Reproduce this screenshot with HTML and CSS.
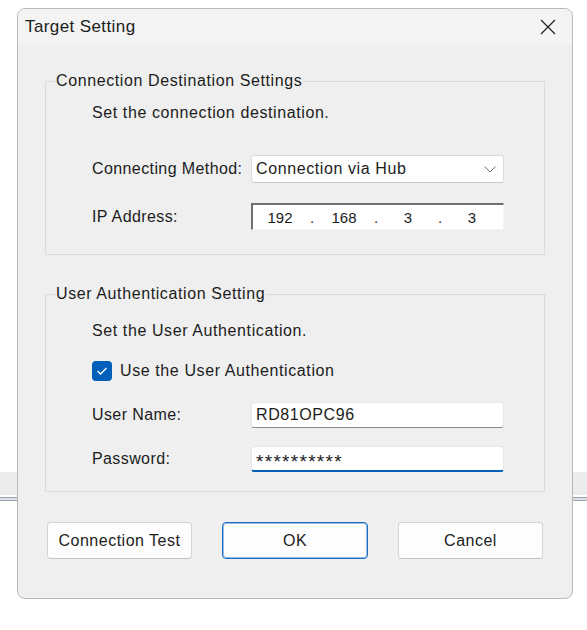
FILE: index.html
```html
<!DOCTYPE html>
<html lang="en">
<head>
<meta charset="UTF-8">
<meta name="viewport" content="width=device-width, initial-scale=1.0">
<title>Target Setting</title>
<link rel="stylesheet" href="styles.css">
</head>
<body>

<div class="dialog">
<div class="titlebar">
<span class="title">Target Setting</span>
<button class="close" aria-label="Close">
<svg width="16" height="16" viewBox="0 0 16 16"><path d="M1 1 L15 15 M15 1 L1 15" stroke="#1b1b1b" stroke-width="1.1" fill="none"/></svg>
</button>
</div>

<div class="content">
<fieldset class="group group-dest">
<legend>Connection Destination Settings</legend>
<div class="group-body">
<p class="note">Set the connection destination.</p>
<div class="row row-method">
<label>Connecting Method:</label>
<div class="select">
<span>Connection via Hub</span>
<svg width="12" height="7" viewBox="0 0 12 7"><path d="M0.5 0.5 L6 6 L11.5 0.5" stroke="#6a6a6a" stroke-width="1" fill="none"/></svg>
</div>
</div>
<div class="row row-ip">
<label>IP Address:</label>
<div class="ip">
<span class="seg">192</span><span class="dot">.</span>
<span class="seg">168</span><span class="dot">.</span>
<span class="seg">3</span><span class="dot">.</span>
<span class="seg">3</span>
</div>
</div>
</div>
</fieldset>

<fieldset class="group group-auth">
<legend>User Authentication Setting</legend>
<div class="group-body">
<p class="note">Set the User Authentication.</p>
<div class="check-row">
<span class="checkbox">
<svg width="12" height="10" viewBox="0 0 12 10"><path d="M1.5 5 L4.5 8 L10.5 2" stroke="#fff" stroke-width="1.3" fill="none"/></svg>
</span>
<span>Use the User Authentication</span>
</div>
<div class="row row-user">
<label>User Name:</label>
<div class="field">RD81OPC96</div>
</div>
<div class="row row-pass">
<label>Password:</label>
<div class="field field-focus"><span class="mask">**********</span></div>
</div>
</div>
</fieldset>

<div class="actions">
<button class="btn">Connection Test</button>
<button class="btn btn-default">OK</button>
<button class="btn">Cancel</button>
</div>
</div>
</div>

</body>
</html>
```

FILE: styles.css
```css
html {
height: 100%;
background: linear-gradient(#fff 0 472px, #ececec 472px 495px, #fff 495px 497px, #9fa3ad 497px 498px, #dde0e6 498px 500px, #9fa3ad 500px 501px, #fff 501px);
}
body {
margin: 0;
font-family: "Liberation Sans", Arial, sans-serif;
font-size: 16px;
letter-spacing: 0.6px;
color: #1c1c1c;
}
.dialog {
width: 556px;
height: 591px;
box-sizing: border-box;
margin: 8px 0 0 17px;
border: 1px solid #b9b9b9;
border-radius: 8px;
background: #efefef;
overflow: hidden;
}
.titlebar {
height: 36px;
background: #f3f3f3;
display: flex;
align-items: center;
justify-content: space-between;
padding: 0 16px 0 7px;
}
.title {
font-size: 17px;
letter-spacing: 0.4px;
}
.close {
border: none;
background: none;
padding: 0;
display: flex;
}
.content {
padding: 26px 27px 0;
}
.group {
margin: 0;
padding: 0;
border: 1px solid #dadada;
min-width: 0;
}
.group legend {
margin-left: 9px;
padding: 0 1px;
line-height: 20px;
}
.group-body {
padding: 12px 40px 24px 46px;
}
.group-auth {
margin-top: 29px;
}
.group-auth .group-body {
padding-top: 17px;
padding-bottom: 19px;
}
.note {
margin: 0;
line-height: 20px;
}
.row {
display: grid;
grid-template-columns: 159px 253px;
align-items: center;
}
.row label {
letter-spacing: 0.4px;
}
.row-method {
margin-top: 32px;
}
.row-ip {
margin-top: 20px;
}
.select {
height: 28px;
box-sizing: border-box;
background: #fff;
border: 1px solid #dcdcdc;
border-bottom-color: #c8c8c8;
border-radius: 3px;
display: flex;
align-items: center;
justify-content: space-between;
padding: 0 7px 0 4px;
}
.ip {
height: 27px;
box-sizing: border-box;
background: #fff;
border-top: 2px solid #6f6f6f;
border-left: 2px solid #6f6f6f;
border-right: 1px solid #f4f4f4;
border-bottom: 1px solid #f4f4f4;
display: flex;
align-items: center;
padding-left: 1px;
font-size: 15px;
letter-spacing: 0;
}
.seg {
width: 52px;
text-align: center;
}
.dot {
width: 12px;
text-align: center;
}
.check-row {
margin-top: 20px;
height: 20px;
display: flex;
align-items: center;
gap: 8px;
}
.checkbox {
width: 20px;
height: 20px;
box-sizing: border-box;
background: #005fb8;
border-radius: 4px;
display: flex;
align-items: center;
justify-content: center;
}
.row-user {
margin-top: 21px;
}
.row-pass {
margin-top: 18px;
}
.field {
height: 26px;
box-sizing: border-box;
background: #fff;
border: 1px solid #e6e6e6;
border-bottom-color: #8a8a8a;
border-radius: 3px;
padding-left: 4px;
display: flex;
align-items: center;
}
.field-focus {
border-bottom: 2px solid #005fb8;
}
.mask {
font-size: 19px;
letter-spacing: 1.3px;
line-height: 1;
padding-top: 5px;
}
.actions {
margin-top: 30px;
padding: 0 2px;
display: flex;
justify-content: space-between;
}
.btn {
width: 145px;
height: 37px;
box-sizing: border-box;
background: #fdfdfd;
border: 1px solid #d3d3d3;
border-bottom-color: #c2c2c2;
border-radius: 4px;
font-family: inherit;
font-size: 16px;
letter-spacing: 0.5px;
color: #1c1c1c;
padding: 0;
}
.btn-default {
width: 146px;
border: 1px solid #1a6fc4;
box-shadow: inset 0 0 0 1px rgba(26, 111, 196, 0.45);
}
```
